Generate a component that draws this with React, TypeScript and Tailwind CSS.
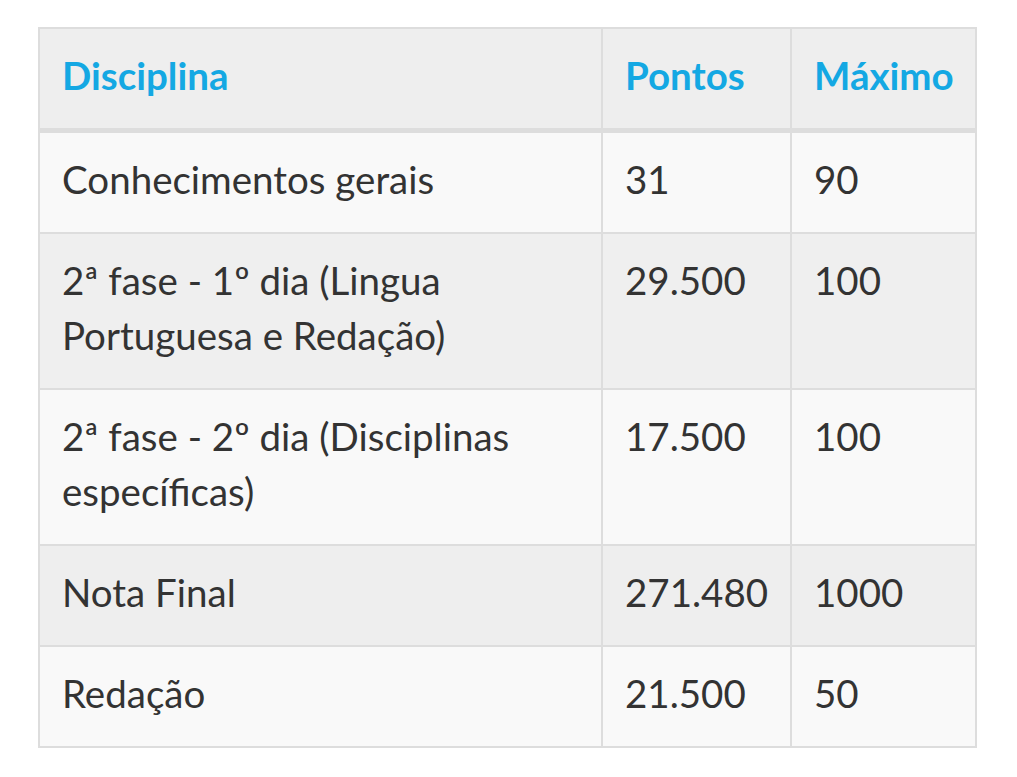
import React from "react";

const rows: { d: string; p: string; m: string; bg: string }[] = [
  { d: "Conhecimentos gerais", p: "31", m: "90", bg: "bg-[#f9f9f9]" },
  { d: "2ª fase - 1º dia (Lingua Portuguesa e Redação)", p: "29.500", m: "100", bg: "bg-[#efefef]" },
  { d: "2ª fase - 2º dia (Disciplinas específicas)", p: "17.500", m: "100", bg: "bg-[#f9f9f9]" },
  { d: "Nota Final", p: "271.480", m: "1000", bg: "bg-[#eeeeee]" },
  { d: "Redação", p: "21.500", m: "50", bg: "bg-[#f9f9f9]" },
];

export default function App() {
  return (
    <div className="min-h-[777px] w-[1017px] bg-white pt-[27px] pl-[38px]" style={{ fontFamily: "Lato, 'Noto Sans', sans-serif" }}>
      <div className="grid w-[939px] grid-cols-[561px_187px_183px] gap-[2px] bg-[#dddddd] p-[2px] text-[38.5px] leading-[55px] text-[#333333]">
        <div className="bg-[#eeeeee] px-[22px] pt-[19px] pb-[25px] font-bold text-[#14a8e3] border-b-[3px] border-[#dddddd]">Disciplina</div>
        <div className="bg-[#eeeeee] px-[22px] pt-[19px] pb-[25px] font-bold text-[#14a8e3] border-b-[3px] border-[#dddddd]">Pontos</div>
        <div className="bg-[#eeeeee] px-[22px] pt-[19px] pb-[25px] font-bold text-[#14a8e3] border-b-[3px] border-[#dddddd]">Máximo</div>
        {rows.map((r, i) => (
          <React.Fragment key={i}>
            <div className={`${r.bg} px-[22px] pt-[19px] pb-[25px] pr-[40px]`}>{r.d}</div>
            <div className={`${r.bg} px-[22px] pt-[19px] pb-[25px]`}>{r.p}</div>
            <div className={`${r.bg} px-[22px] pt-[19px] pb-[25px]`}>{r.m}</div>
          </React.Fragment>
        ))}
      </div>
    </div>
  );
}
